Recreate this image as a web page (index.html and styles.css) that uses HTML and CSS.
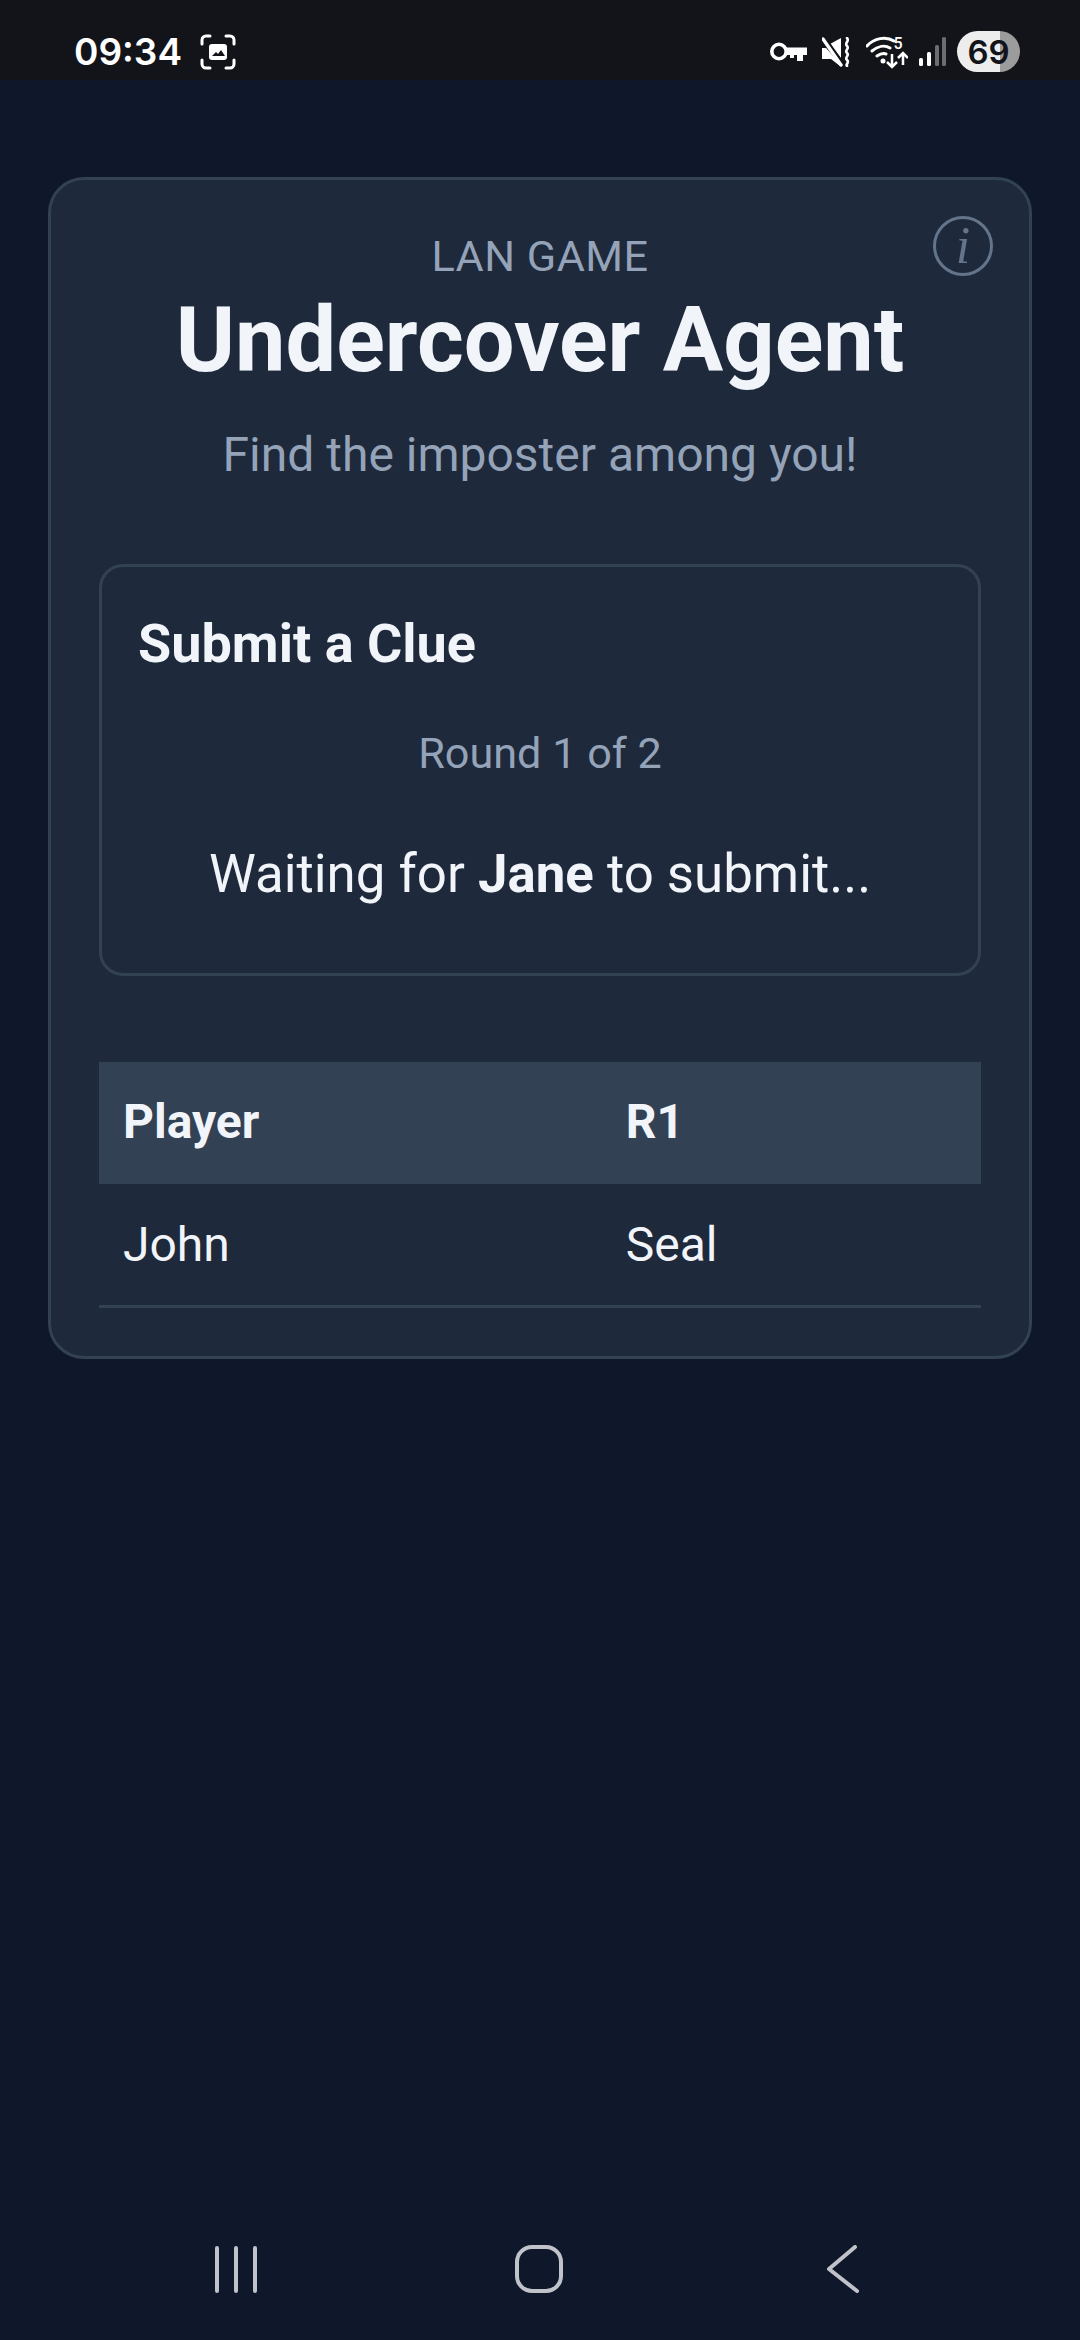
FILE: index.html
```html
<!DOCTYPE html>
<html lang="en">
<head>
    <meta charset="UTF-8">
    <meta name="viewport" content="width=device-width, initial-scale=1.0">
    <title>Undercover Agent</title>
    <link rel="stylesheet" href="styles.css">
</head>
<body>
    <div class="status-bar">
        <div class="status-left">
            <span class="clock">09:34</span>
            <svg class="shot-icon" width="36" height="36" viewBox="0 0 36 36" fill="none">
                <path d="M2 10V6a4 4 0 0 1 4-4h4M26 2h4a4 4 0 0 1 4 4v4M34 26v4a4 4 0 0 1-4 4h-4M10 34H6a4 4 0 0 1-4-4v-4" stroke="#fff" stroke-width="3" stroke-linecap="round"/>
                <rect x="9" y="10" width="18" height="16" rx="3" fill="#fff"/>
                <path d="M12 22l4-4 2 2 3-4 4 6z" fill="#121419"/>
            </svg>
        </div>
        <div class="status-right">
            <svg class="key" width="37" height="20" viewBox="0 0 37 20" fill="none">
                <circle cx="9" cy="9.5" r="7.2" stroke="#fff" stroke-width="3.6"/>
                <path d="M16 5.5h21v7.5h-4v6h-6v-6h-3v3h-4v-3h-4z" fill="#fff"/>
            </svg>
            <svg class="mute" width="28" height="30" viewBox="0 0 28 30" fill="none">
                <path d="M0 11h4l16 18h-2l-9-7H0z" fill="#fff"/>
                <path d="M8 7l11-6v20z" fill="#fff"/>
                <path d="M2 0l18 26" stroke="#121419" stroke-width="3.5"/>
                <path d="M1 2l18 26" stroke="#fff" stroke-width="3.4" stroke-linecap="round"/>
                <path d="M25 1c3 3-3 5 0 8s-3 4 0 7-3 4 0 7-2 4 0 6" stroke="#fff" stroke-width="2.6" stroke-linecap="round"/>
            </svg>
            <svg class="wifi" width="42" height="38" viewBox="0 -3 42 38" fill="none">
                <path d="M1 10C8 2 20 0 28 5M6 15c6-5 13-6 18-3M11 20c3-2 6-3 9-2" stroke="#fff" stroke-width="3" stroke-linecap="round"/>
                <circle cx="17" cy="25" r="2.5" fill="#fff"/>
                <path d="M26 18v13M21 26l5 5 5-5" stroke="#fff" stroke-width="2.5"/>
                <path d="M37 29V17M32 22l5-5 5 5" stroke="#fff" stroke-width="2.5"/>
                <text x="27.5" y="13" class="wifi-num">5</text>
            </svg>
            <svg class="signal" width="27" height="30" viewBox="0 0 27 30">
                <rect x="0" y="21" width="4" height="8" rx="1.5" fill="#fff"/>
                <rect x="8" y="15" width="4" height="14" rx="1.5" fill="#fff"/>
                <rect x="16" y="8" width="4" height="21" rx="1.5" fill="#6b6d70"/>
                <rect x="23" y="0" width="4" height="29" rx="1.5" fill="#6b6d70"/>
            </svg>
            <span class="battery">69</span>
        </div>
    </div>

    <main class="page">
        <div class="card">
            <button class="info-btn" type="button">i</button>
            <div class="header">
                <p class="eyebrow">LAN GAME</p>
                <h1>Undercover Agent</h1>
                <p class="tagline">Find the imposter among you!</p>
            </div>

            <section class="clue-panel">
                <h2>Submit a Clue</h2>
                <p class="round">Round 1 of 2</p>
                <p class="waiting">Waiting for <strong>Jane</strong> to submit...</p>
            </section>

            <table class="scores">
                <thead>
                    <tr><th>Player</th><th>R1</th></tr>
                </thead>
                <tbody>
                    <tr><td>John</td><td>Seal</td></tr>
                </tbody>
            </table>
        </div>
    </main>

    <nav class="nav-bar">
        <svg class="nav-menu" width="44" height="48" viewBox="0 0 44 48" fill="none" stroke="#c0c3c9" stroke-width="4" stroke-linecap="round">
            <path d="M3 3v43M22 3v43M41 3v43"/>
        </svg>
        <svg class="nav-home" width="48" height="48" viewBox="0 0 48 48" fill="none">
            <rect x="2" y="2" width="44" height="44" rx="15" stroke="#c0c3c9" stroke-width="4"/>
        </svg>
        <svg class="nav-back" width="33" height="48" viewBox="0 0 33 48" fill="none" stroke="#c0c3c9" stroke-width="4" stroke-linecap="round" stroke-linejoin="round">
            <path d="M29 2L3 24l28 22"/>
        </svg>
    </nav>
</body>
</html>
```

FILE: styles.css
```css
* {
    box-sizing: border-box;
}

html, body {
    height: 100%;
}

body {
    margin: 0;
    display: flex;
    flex-direction: column;
    font-family: Roboto, "Liberation Sans", sans-serif;
    background-color: #0f172a;
    color: #f1f5f9;
}

.status-bar {
    height: 80px;
    flex: none;
    display: flex;
    align-items: center;
    justify-content: space-between;
    padding: 23px 60px 0 74px;
    background-color: #121419;
    color: #fff;
}

.status-left {
    display: flex;
    align-items: center;
    gap: 18px;
}

.clock {
    font-family: Inter, Roboto, sans-serif;
    font-size: 37px;
    font-weight: 600;
}

.status-right {
    display: flex;
    align-items: center;
    gap: 11px;
}

.key {
    margin-right: 4px;
}

.mute {
    margin-right: 5px;
}

.wifi-num {
    font-family: Roboto, sans-serif;
    font-size: 16px;
    font-weight: 500;
    fill: #fff;
}

.battery {
    width: 63px;
    height: 41px;
    border-radius: 21px;
    display: flex;
    align-items: center;
    justify-content: center;
    font-family: Inter, Roboto, sans-serif;
    font-size: 33px;
    font-weight: 600;
    color: #121419;
    background: linear-gradient(90deg, #ededed 69%, #9c9c9c 69%);
}

.page {
    flex: 1;
    padding: 97px 48px 0;
}

.card {
    position: relative;
    padding: 52px 48px 48px;
    background-color: #1e293b;
    border: 3px solid #334155;
    border-radius: 36px;
}

.info-btn {
    position: absolute;
    top: 36px;
    right: 36px;
    width: 60px;
    height: 60px;
    padding: 0;
    border: 3px solid #64748b;
    border-radius: 50%;
    background: none;
    color: #64748b;
    font-family: "Liberation Serif", serif;
    font-style: italic;
    font-size: 52px;
    line-height: 50px;
}

.header {
    text-align: center;
    margin-bottom: 81px;
}

.eyebrow {
    margin: 0;
    font-size: 43.2px;
    line-height: 50px;
    letter-spacing: 0.5px;
    color: #94a3b8;
}

h1 {
    margin: 6px 0 0;
    font-size: 90px;
    line-height: 105px;
    font-weight: 700;
    color: #f1f5f9;
}

.tagline {
    margin: 34px 0 0;
    font-size: 48px;
    line-height: 56px;
    color: #94a3b8;
}

.clue-panel {
    padding: 45px 36px 68px;
    border: 3px solid #334155;
    border-radius: 24px;
    margin-bottom: 86px;
}

h2 {
    margin: 0 0 53px;
    font-size: 54px;
    line-height: 63px;
    font-weight: 700;
}

.round {
    margin: 0 0 64px;
    text-align: center;
    font-size: 43.2px;
    line-height: 51px;
    color: #94a3b8;
}

.waiting {
    margin: 0;
    text-align: center;
    font-size: 52.8px;
    line-height: 62px;
}

.scores {
    width: 100%;
    border-collapse: collapse;
    font-size: 48px;
}

.scores th, .scores td {
    height: 122px;
    padding: 0 24px;
    text-align: left;
    width: 57%;
}

.scores th {
    padding-bottom: 3px;
    background-color: #334155;
    font-weight: 700;
}

.scores td {
    border-bottom: 3px solid #334155;
    font-weight: 400;
}

.nav-bar {
    height: 170px;
    flex: none;
    display: flex;
    align-items: flex-start;
    padding: 75px 0 0 214px;
}

.nav-home {
    margin-left: 257px;
}

.nav-back {
    margin-left: 263px;
}
```
